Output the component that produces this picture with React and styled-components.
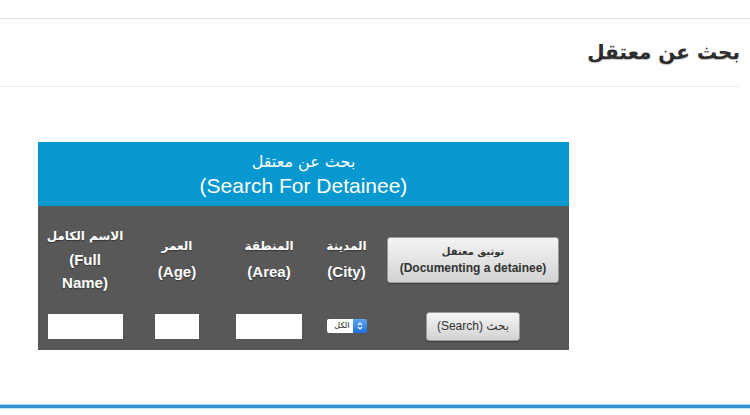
import React from 'react'
import styled, { createGlobalStyle } from 'styled-components'

const GlobalStyle = createGlobalStyle`
  body {
    margin: 0;
    background: #ffffff;
    font-family: 'Liberation Sans', 'DejaVu Sans', sans-serif;
  }
`;

const Page = styled.div`
  width: 750px;
  height: 415px;
  display: flex;
  flex-direction: column;
  overflow: hidden;
`;

const TopRule = styled.div`
  margin-top: 18px;
  height: 1px;
  background: #e4e4e4;
`;

const TitleBar = styled.div`
  height: 67px;
  display: flex;
  align-items: center;
  justify-content: flex-end;
  border-bottom: 1px solid #efefef;
  margin-right: 10px;
`;

const Title = styled.h1`
  margin: 0 0 2px;
  direction: rtl;
  font-family: 'DejaVu Sans', sans-serif;
  font-size: 20px;
  font-weight: bold;
  color: #2d2d2d;
  text-shadow: 0 1px 1px rgba(0, 0, 0, 0.25);
`;

const Content = styled.div`
  flex: 1;
  padding: 55px 0 0 38px;
`;

const Panel = styled.div`
  width: 531px;
  background: #585858;
`;

const PanelHead = styled.div`
  height: 64px;
  background: #0798d0;
  color: #fff;
  display: flex;
  flex-direction: column;
  align-items: center;
  justify-content: center;
  text-align: center;
`;

const HeadArabic = styled.div`
  font-family: 'DejaVu Sans', sans-serif;
  font-size: 16px;
  line-height: 22px;
  direction: rtl;
`;

const HeadEnglish = styled.div`
  font-size: 21px;
  line-height: 25px;
`;

const Grid = styled.div`
  direction: rtl;
  display: grid;
  grid-template-columns: 192px 61px 94px 90px 94px;
  grid-template-rows: 104px 40px;
`;

const Cell = styled.div`
  display: flex;
  align-items: center;
  justify-content: center;
  padding-top: ${p => p.$top || 0}px;
  padding-bottom: ${p => p.$bottom || 0}px;
`;

const Label = styled.div`
  color: #fff;
  font-weight: bold;
  text-align: center;
  font-size: 15px;
  line-height: ${p => p.$lh || 25}px;
  text-shadow: 0 1px 1px rgba(0, 0, 0, 0.4);
`;

const Ar = styled.div`
  font-family: 'DejaVu Sans', sans-serif;
  font-size: 12px;
  direction: rtl;
`;

const En = styled.div`
  direction: ltr;
`;

const Button = styled.button`
  width: ${p => p.$w}px;
  height: ${p => p.$h}px;
  border: 1px solid #9a9a9a;
  border-radius: 3px;
  background: linear-gradient(180deg, #f4f4f4 0%, #e2e2e2 55%, #d2d2d2 100%);
  color: #333;
  font-family: 'Liberation Sans', 'DejaVu Sans', sans-serif;
  font-size: 12px;
  font-weight: ${p => (p.$bold ? 'bold' : 'normal')};
  line-height: 17px;
  padding: 0;
  display: flex;
  flex-direction: column;
  align-items: center;
  justify-content: center;
  box-shadow: 0 1px 1px rgba(0, 0, 0, 0.3);
`;

const SmallAr = styled.span`
  font-family: 'DejaVu Sans', sans-serif;
  font-size: 10px;
  direction: rtl;
`;

const Input = styled.input`
  width: ${p => p.$w}px;
  height: 25px;
  box-sizing: border-box;
  border: none;
  background: #fff;
  padding: 0;
  outline: none;
`;

const SelectBox = styled.div`
  direction: ltr;
  display: flex;
  height: 14px;
  border-radius: 2px;
  overflow: hidden;
`;

const SelectValue = styled.div`
  width: 26px;
  background: #fff;
  color: #222;
  font-family: 'DejaVu Sans', sans-serif;
  font-size: 8px;
  line-height: 14px;
  text-align: right;
  padding-right: 3px;
  box-sizing: border-box;
`;

const Stepper = styled.div`
  width: 14px;
  background: linear-gradient(180deg, #5aa7f5, #1f6fe0);
  display: flex;
  align-items: center;
  justify-content: center;
`;

const BottomRule = styled.div`
  height: 3px;
  background: #3391d2;
  border-top: 1px solid #a9dcf5;
  border-bottom: 1px solid #bfe5f8;
  margin-bottom: 6px;
`;

function App() {
  return (
    <Page>
      <GlobalStyle />
      <TopRule />
      <TitleBar>
        <Title>بحث عن معتقل</Title>
      </TitleBar>
      <Content>
        <Panel>
          <PanelHead>
            <HeadArabic>بحث عن معتقل</HeadArabic>
            <HeadEnglish>(Search For Detainee)</HeadEnglish>
          </PanelHead>
          <Grid>
            <Cell $top={4}>
              <Button $w={172} $h={46} $bold>
                <SmallAr>توثيق معتقل</SmallAr>
                <span>(Documenting a detainee)</span>
              </Button>
            </Cell>
            <Cell $top={2}>
              <Label><Ar>المدينة</Ar><En>(City)</En></Label>
            </Cell>
            <Cell $top={2}>
              <Label><Ar>المنطقة</Ar><En>(Area)</En></Label>
            </Cell>
            <Cell $top={2}>
              <Label><Ar>العمر</Ar><En>(Age)</En></Label>
            </Cell>
            <Cell $top={2}>
              <Label $lh={23}><Ar>الاسم الكامل</Ar><En>(Full</En><En>Name)</En></Label>
            </Cell>
            <Cell $bottom={8}>
              <Button $w={94} $h={29}>بحث (Search)</Button>
            </Cell>
            <Cell $bottom={8}>
              <SelectBox>
                <SelectValue>الكل</SelectValue>
                <Stepper>
                  <svg width="6" height="10" viewBox="0 0 6 10">
                    <path d="M1 4 L3 2 L5 4 M1 6 L3 8 L5 6" stroke="#fff" strokeWidth="1.2" fill="none" />
                  </svg>
                </Stepper>
              </SelectBox>
            </Cell>
            <Cell $bottom={8}>
              <Input $w={66} />
            </Cell>
            <Cell $bottom={8}>
              <Input $w={44} />
            </Cell>
            <Cell $bottom={8}>
              <Input $w={75} />
            </Cell>
          </Grid>
        </Panel>
      </Content>
      <BottomRule />
    </Page>
  );
}

export default App;
